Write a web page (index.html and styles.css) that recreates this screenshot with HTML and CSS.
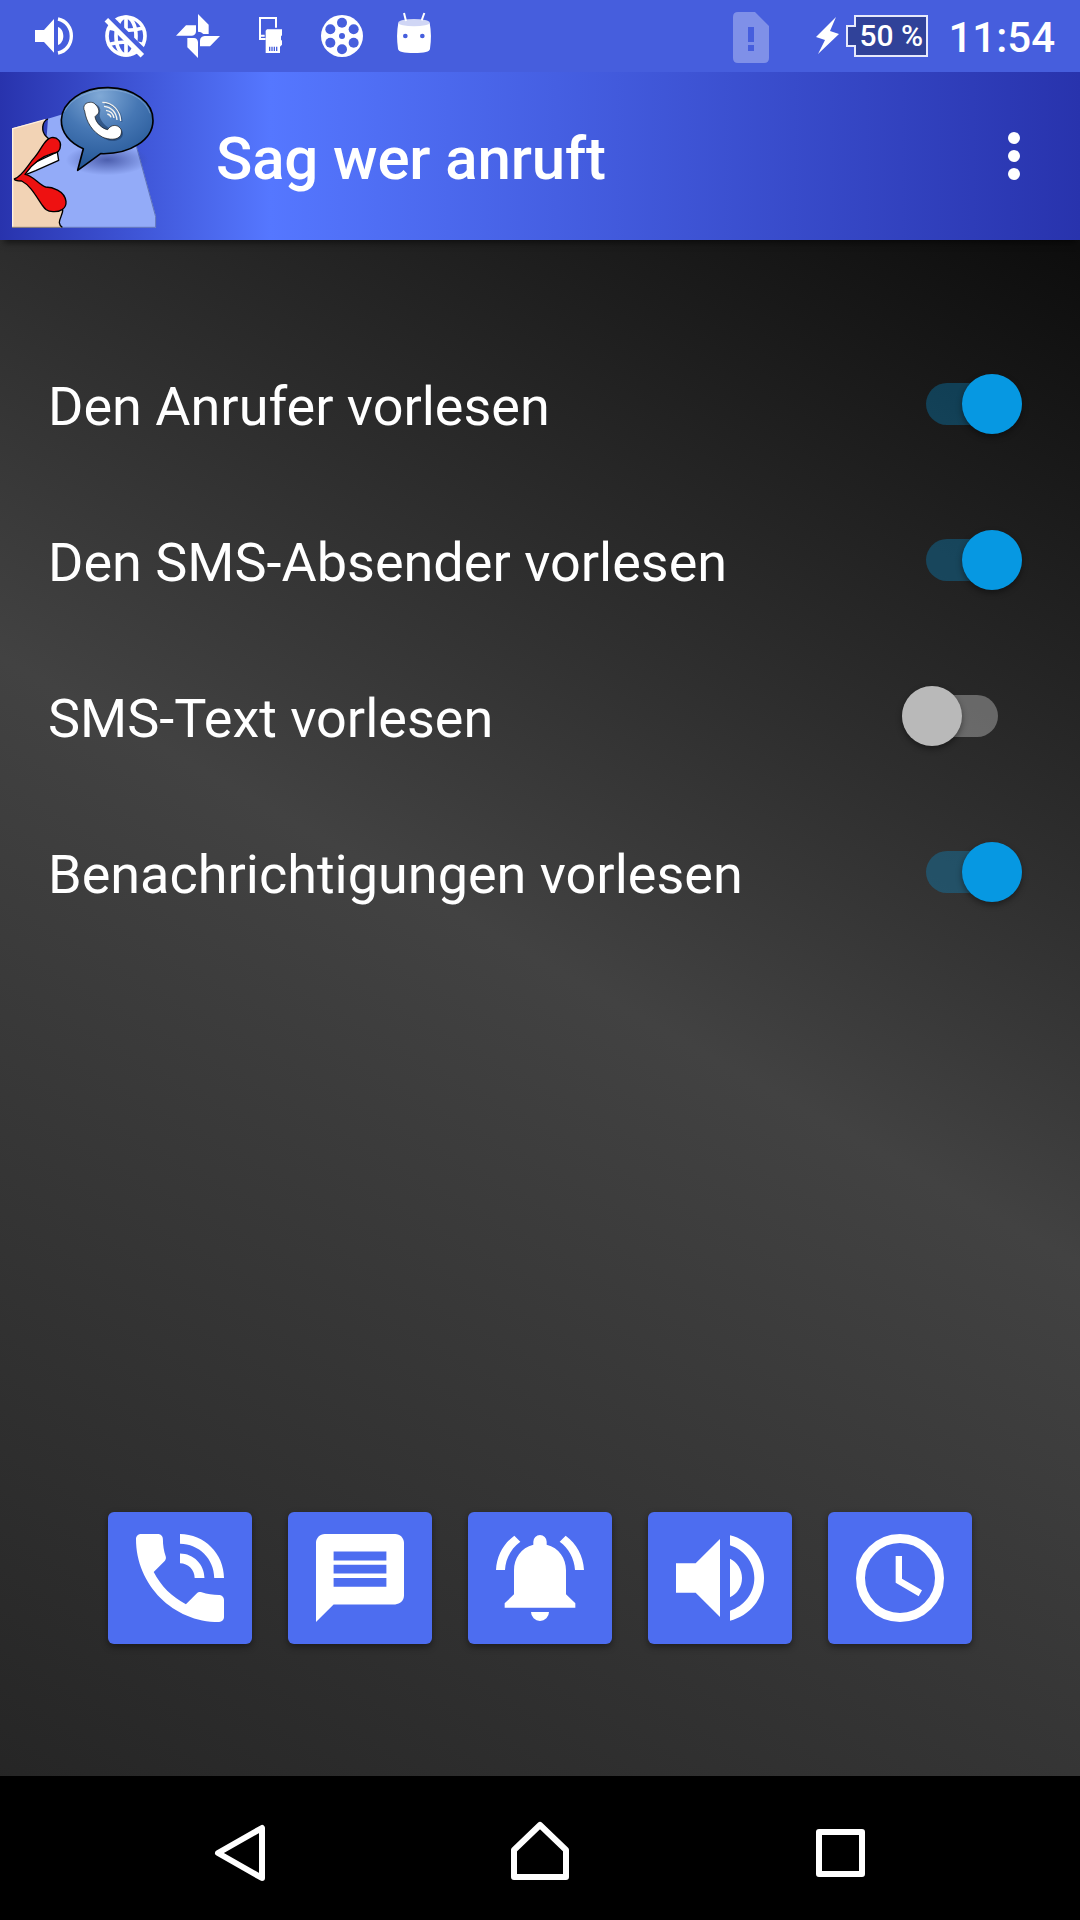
FILE: index.html
```html
<!DOCTYPE html>
<html lang="de">
<head>
    <meta charset="UTF-8">
    <title>Sag wer anruft</title>
    <link rel="stylesheet" href="styles.css">
</head>
<body>

<!-- Statusleiste -->
<div class="status">
    <div class="status_left">
        <svg class="ico" viewBox="0 0 216 216">
            <path fill="#fff" d="M51 90h27l30-33v101l-30-32H51zM120 81c10 4 16 14 16 27s-6 23-16 27z"/>
            <path fill="none" stroke="#fff" stroke-width="10" d="M120 57c25 5 40 27 40 51s-15 46-40 51"/>
        </svg>
        <svg class="ico" viewBox="0 0 216 216">
            <g fill="none" stroke="#fff" stroke-width="11">
                <circle cx="108" cy="108" r="57"/>
                <ellipse cx="108" cy="108" rx="30" ry="57"/>
                <path d="M56 84q52 14 104 0M52 134q56-16 112 0M108 50v116"/>
            </g>
            <path stroke="#465edd" stroke-width="16" d="M52 44L176 168"/>
            <path stroke="#465edd" stroke-width="16" d="M40 50L52 62M150 174L162 186"/>
            <path stroke="#fff" stroke-width="15" d="M49 59L157 167"/>
        </svg>
        <svg class="ico" viewBox="0 0 216 216">
            <path fill="#fff" d="M108 42l32 32v28h-16q-6-7-16-7zM174 108l-30 31h-30v-17q0-12 14-14zM108 174l-32-32v-28h20q10 0 12 12zM42 107l30-31h30v18q0 12-12 13z"/>
        </svg>
        <svg class="ico" viewBox="0 0 216 216">
            <path fill="none" stroke="#fff" stroke-width="6" d="M126 83V54H78v63h17M78 107h14" />
            <path fill="#fff" d="M99 88h45v18l-3 3v10l3 3v12l-6 6v19H95V92z"/>
            <path stroke="#465edd" stroke-width="4" d="M107 140v13M114 140v13M121 140v13M128 140v13"/>
        </svg>
        <svg class="ico" viewBox="0 0 216 216">
            <circle cx="108" cy="108" r="63" fill="#fff"/>
            <g fill="#465edd">
                <circle cx="108" cy="68" r="15"/>
                <circle cx="108" cy="148" r="15"/>
                <circle cx="73" cy="88" r="15"/>
                <circle cx="143" cy="88" r="15"/>
                <circle cx="73" cy="128" r="15"/>
                <circle cx="143" cy="128" r="15"/>
                <circle cx="108" cy="108" r="9"/>
            </g>
        </svg>
        <svg class="ico" viewBox="0 0 216 216">
            <path fill="#fff" d="M61 68h94q7 38 1 78-1 13-48 13t-48-13q-6-40 1-78z"/>
            <ellipse cx="108" cy="68" rx="47" ry="11" fill="#d0d6f5"/>
            <path stroke="#fff" stroke-width="6" d="M78 39l6 24M139 39l-8 22"/>
            <circle cx="82" cy="108" r="7" fill="#465edd"/>
            <circle cx="133" cy="108" r="7" fill="#465edd"/>
        </svg>
    </div>
    <div class="status_right">
        <svg class="sim" viewBox="0 0 36 51">
            <path fill="#7f90e8" fill-rule="evenodd" d="M5 0h17l14 14v32q0 5-5 5H5q-5 0-5-5V5q0-5 5-5zM15 15v15h6V15zM15 33v6h6v-6z"/>
        </svg>
        <svg class="bolt" viewBox="0 0 24 38">
            <path fill="#fff" d="M20 0L0 20l9 3L2 37l21-20-9-3z"/>
        </svg>
        <div class="battery">
            <svg class="battery_bg" viewBox="0 0 82 42">
                <path fill="#304299" stroke="#e6e9fb" stroke-width="2" d="M9 1h72v40H9V31H1V11h8z"/>
            </svg>
            <span class="percent">50 %</span>
        </div>
        <span class="time">11:54</span>
    </div>
</div>

<!-- Titelleiste -->
<div class="header">
    <svg class="logo" viewBox="0 6 540 504">
        <defs>
            <radialGradient id="bubble" cx="0.42" cy="0.1" r="0.85">
                <stop offset="0" stop-color="#80a9d6"/>
                <stop offset="0.5" stop-color="#4677b4"/>
                <stop offset="1" stop-color="#265898"/>
            </radialGradient>
            <radialGradient id="shade">
                <stop offset="0" stop-color="#3b4c9c" stop-opacity="0.8"/>
                <stop offset="1" stop-color="#3b4c9c" stop-opacity="0"/>
            </radialGradient>
        </defs>
        <path fill="#93abf8" d="M144 146l44-13 222 97 58 210v33H180l-10-60L60 320l80-120z"/>
        <path fill="none" stroke="#5f73b8" stroke-width="3" d="M410 232l57 208v32H186"/>
        <path fill="#f2d3b5" d="M36 175L144 147c-20 8-20 38-6 52l9 8L60 325l128 94c2 12-11 27-10 39q1 10 9 14H36z"/>
        <path fill="none" stroke="#fff0df" stroke-width="4" d="M38 470V176l98-27"/>
        <path fill="none" stroke="#8d8072" stroke-width="3" d="M36 472h148"/>
        <path fill="none" stroke="#000" stroke-width="4" d="M144 147c-20 8-20 38-6 52l9 8M188 419c2 12-11 27-10 39q1 10 9 14"/>
        <ellipse cx="322" cy="270" rx="125" ry="46" fill="url(#shade)"/>
        <path fill="#fff" stroke="#000" stroke-width="4" stroke-linejoin="round" d="M76 309c10-14 20-26 34-34l62-29 4 25-69 31-30 12z"/>
        <path fill="#ee1111" stroke="#000" stroke-width="4" stroke-linejoin="round" d="M43 327c24-8 42-44 60-64 22-25 29-55 51-60 20-3 30 14 27 26 0 14-10 20-23 21-36 10-65 36-83 63 20 0 44 34 62 38 18 0 57 10 61 43 2 24-20 32-39 31-20-1-24-8-34-22-20-30-36-58-60-70-12 0-22-3-22-6z"/>
        <path fill="url(#bubble)" stroke="#000" stroke-width="5" stroke-linejoin="round" d="M233 301l17-65c-40-17-67-48-66-86 2-55 63-98 141-97 77 1 135 44 134 99-1 57-68 102-157 99z"/>
        <path fill="none" stroke="#9bbce0" stroke-opacity="0.5" stroke-width="3" d="M193 125c22-42 74-65 132-65 62 0 110 27 125 70"/>
        <path fill="#1d3b66" opacity="0.6" d="M262 105c10-8 35-5 39 14l-2 20c5 18 19 30 33 39 15-10 35-2 37 11 1 16-15 25-36 24-38-8-70-56-77-91z"/>
        <path fill="#fff" stroke="#111" stroke-width="2" d="M255 103c8-8 24-8 30-1 9 9 15 20 9 29l-9 9c2 18 21 36 38 39 7-12 22-17 34-8 10 8 8 16 5 25-9 15-35 14-55 5-30-16-48-45-53-78-4-6-3-15 1-20z"/>
        <path fill="none" stroke="#1d3b66" stroke-width="5" opacity="0.5" d="M314 101c30 2 50 26 51 54"/>
        <path fill="none" stroke="#f6f4ef" stroke-width="4" d="M307 97c32 0 54 26 55 56M312 109c22 2 37 18 39 41M318 121c13 2 22 11 24 23M322 132q9 2 11 10"/>
    </svg>
    <h1 class="title">Sag wer anruft</h1>
    <div class="menu">
        <i class="dot"></i>
        <i class="dot"></i>
        <i class="dot"></i>
    </div>
</div>

<div class="content">
    <ul class="list">
        <li>
            <span class="label">Den Anrufer vorlesen</span>
            <div class="switch on"><div class="thumb"></div></div>
        </li>
        <li>
            <span class="label">Den SMS-Absender vorlesen</span>
            <div class="switch on"><div class="thumb"></div></div>
        </li>
        <li>
            <span class="label">SMS-Text vorlesen</span>
            <div class="switch off"><div class="thumb"></div></div>
        </li>
        <li>
            <span class="label">Benachrichtigungen vorlesen</span>
            <div class="switch on"><div class="thumb"></div></div>
        </li>
    </ul>

    <div class="buttons">
        <a class="btn">
            <svg viewBox="3 3 18 18">
                <path fill="#fff" d="M20 15.5c-1.25 0-2.45-.2-3.57-.57-.35-.11-.74-.03-1.02.24l-2.2 2.2c-2.83-1.44-5.15-3.75-6.59-6.58l2.2-2.21c.28-.27.36-.66.25-1.01C8.7 6.45 8.5 5.25 8.5 4c0-.55-.45-1-1-1H4c-.55 0-1 .45-1 1 0 9.39 7.61 17 17 17 .55 0 1-.45 1-1v-3.5c0-.55-.45-1-1-1zM19 12h2c0-4.970-4.03-9-9-9v2c3.87 0 7 3.13 7 7zm-4 0h2c0-2.76-2.24-5-5-5v2c1.66 0 3 1.34 3 3z"/>
            </svg>
        </a>
        <a class="btn">
            <svg viewBox="0 0 20 20">
                <path fill="#fff" fill-rule="evenodd" d="M18 0H2C.9 0 0 .9 0 2v18l4-4h14c1.1 0 2-.9 2-2V2c0-1.1-.9-2-2-2zM4 4h12v2H4zM4 7h12v2H4zM4 10h12v2H4z"/>
            </svg>
        </a>
        <a class="btn">
            <svg viewBox="0 0 264 264">
                <path fill="#fff" d="M26 221v-13l28-27v-72c0-36 21-68 58-77v-9a20 20 0 0 1 40 0v9c37 9 58 41 58 77v72l28 27v13zM105 234h54a27 27 0 0 1-54 0z"/>
                <path fill="#fff" d="M0 108C2 66 22 29 55 5l18 18C46 42 29 73 27 108zM264 108c-2-42-22-79-55-103l-18 18c27 19 44 50 46 85z"/>
            </svg>
        </a>
        <a class="btn">
            <svg viewBox="0 0 264 264">
                <path fill="#fff" d="M0 88v88h59l73 73V15L59 88zM162 74v116c22-11 36-32 36-58s-14-47-36-58zM162 4v30c42 13 73 52 73 98s-31 85-73 98v30c59-14 102-66 102-128S221 18 162 4z"/>
            </svg>
        </a>
        <a class="btn">
            <svg viewBox="0 0 264 264">
                <circle cx="132" cy="132" r="118.5" fill="none" stroke="#fff" stroke-width="27"/>
                <path fill="#fff" d="M119 66h19v68l60 35-10 18-69-41z"/>
            </svg>
        </a>
    </div>
</div>

<!-- Navigation unten -->
<div class="nav">
    <svg viewBox="0 0 72 72">
        <path d="M58 12v50L14 37z"/>
    </svg>
    <svg viewBox="0 0 72 72">
        <path d="M36 9L10 34v27h52V34z"/>
    </svg>
    <svg viewBox="0 0 72 72">
        <path d="M15 16h43v42H15z"/>
    </svg>
</div>

</body>
</html>
```

FILE: styles.css
```css
*{
    margin: 0;
    padding: 0;
    box-sizing: border-box;
}
body{
    width: 1080px;
    height: 1920px;
    overflow: hidden;
    display: flex;
    flex-direction: column;
    font-family: Roboto, "Liberation Sans", sans-serif;
    color: #fff;
    background: linear-gradient(29.36deg, #222 0%, #424242 50%, #000 100%);
}
svg{
    display: block;
}

/* Statusleiste */
.status{
    height: 72px;
    padding: 0 25px 0 18px;
    display: flex;
    justify-content: space-between;
    background: #465edd;
}
.status_left{
    display: flex;
}
.ico{
    width: 72px;
    height: 72px;
}
.status_right{
    display: flex;
    align-items: center;
}
.sim{
    width: 36px;
    height: 51px;
    margin: 3px 47px 0 0;
}
.bolt{
    width: 24px;
    height: 38px;
    margin-right: 6px;
}
.battery{
    width: 82px;
    height: 42px;
    margin-right: 20px;
    position: relative;
}
.battery_bg{
    width: 82px;
    height: 42px;
}
.percent{
    position: absolute;
    left: 13px;
    top: 0;
    line-height: 42px;
    font-size: 30px;
    font-weight: 500;
    white-space: nowrap;
}
.time{
    font-size: 42px;
    font-weight: 500;
    line-height: 72px;
    padding-top: 3px;
}

/* Titelleiste */
.header{
    height: 168px;
    display: flex;
    align-items: center;
    background: linear-gradient(90deg, #2833ad 0%, #5577ff 25%, #2833ad 100%);
    box-shadow: 0 7px 6px -4px rgba(0,0,0,0.5);
}
.logo{
    width: 180px;
    height: 168px;
}
.title{
    flex: 1;
    padding: 4px 0 0 36px;
    font-size: 60px;
    font-weight: 500;
    letter-spacing: -0.15px;
}
.menu{
    display: flex;
    flex-direction: column;
    gap: 6px;
    margin-right: 60px;
}
.dot{
    width: 12px;
    height: 12px;
    border-radius: 50%;
    background: #fff;
}

/* Liste mit Schaltern */
.content{
    flex: 1;
    display: flex;
    flex-direction: column;
    justify-content: space-between;
    padding: 86px 0 132px;
}
.list li{
    list-style: none;
    height: 156px;
    padding: 0 58px 0 48px;
    display: flex;
    align-items: center;
    justify-content: space-between;
}
.label{
    font-size: 54px;
    padding-top: 4px;
}
.switch{
    width: 96px;
    height: 42px;
    margin-bottom: 1px;
    border-radius: 21px;
    display: flex;
    align-items: center;
}
.on{
    justify-content: flex-end;
    background: rgba(3,155,229,0.3);
}
.off{
    margin-right: 24px;
    background: rgba(255,255,255,0.3);
}
.thumb{
    width: 60px;
    height: 60px;
    flex: none;
    border-radius: 50%;
    background: #b9b9b9;
    box-shadow: 0 3px 6px rgba(0,0,0,0.4);
}
.on .thumb{
    background: #0698e2;
}

.buttons{
    display: flex;
    justify-content: center;
    gap: 36px;
}
.btn{
    width: 144px;
    height: 132px;
    display: flex;
    align-items: center;
    justify-content: center;
    border-radius: 6px;
    background: #4d6df0;
    box-shadow: 0 3px 7px rgba(0,0,0,0.4);
}
.btn svg{
    width: 88px;
    height: 88px;
}

/* Navigation unten */
.nav{
    height: 144px;
    padding: 8px 204px 0;
    display: flex;
    align-items: center;
    justify-content: space-between;
    background: #000;
}
.nav svg{
    width: 72px;
    height: 72px;
}
.nav path{
    fill: none;
    stroke: #fff;
    stroke-width: 6;
    stroke-linejoin: round;
}
```
